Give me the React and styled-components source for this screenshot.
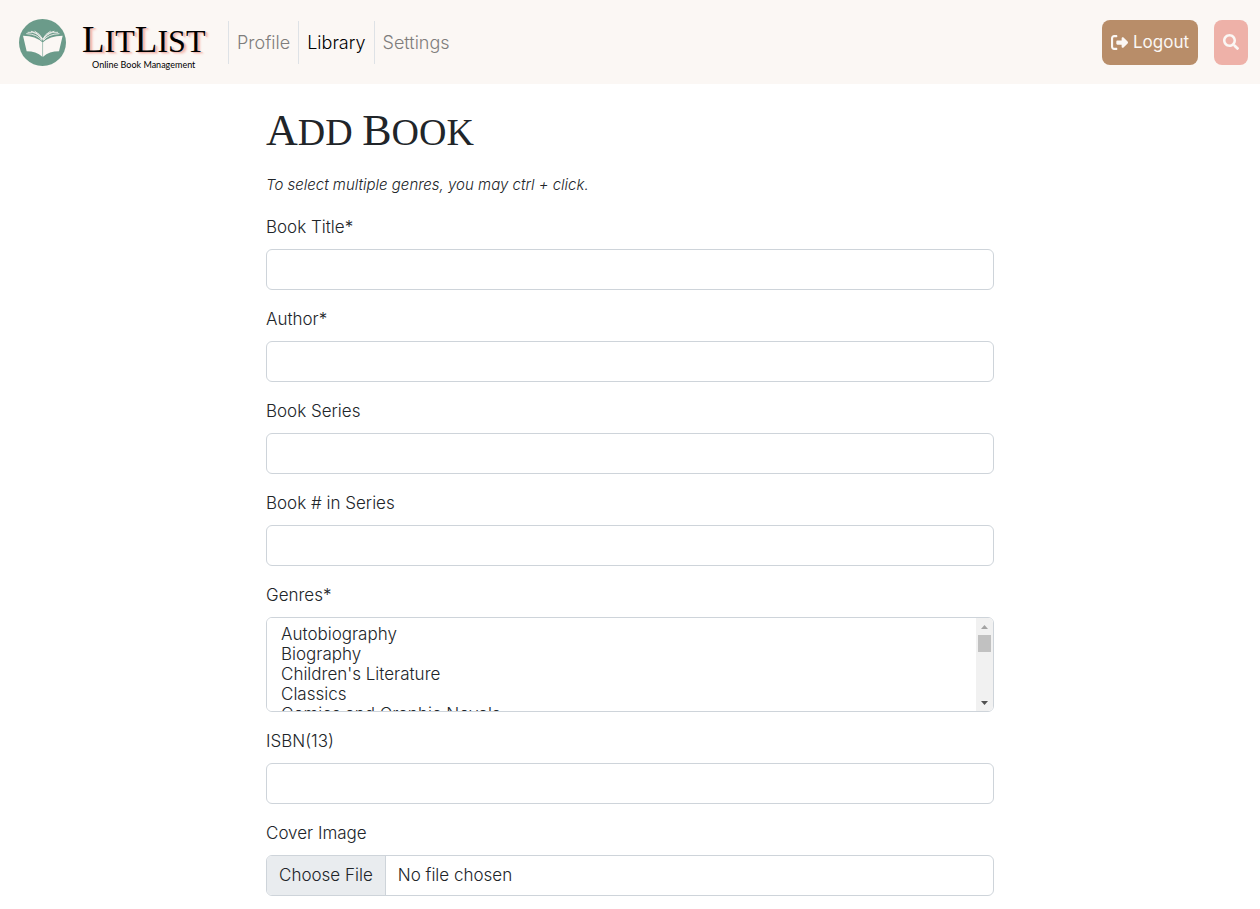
import React, { useState } from 'react';
import styled, { createGlobalStyle } from 'styled-components';
import { FaRightFromBracket } from 'react-icons/fa6';
import { FaSearch } from 'react-icons/fa';

const GlobalStyle = createGlobalStyle`
  *, *::before, *::after { box-sizing: border-box; }
  body {
    margin: 0;
    background: #fff;
    color: #212529;
    font-family: Inter, "Open Sans", sans-serif;
    font-size: 17px;
    font-weight: 300;
    line-height: 27px;
  }
`;

const Header = styled.header`
  display: flex;
  align-items: center;
  min-height: 84px;
  padding: 0 12px 0 19px;
  background: #fbf7f4;
`;

const Brand = styled.a`
  display: flex;
  align-items: center;
  gap: 16px;
  width: 209px;
  color: #000;
  text-decoration: none;
`;

const BrandText = styled.span`
  display: flex;
  flex-direction: column;
  align-items: center;
  gap: 2px;
  padding-top: 10px;
`;

const Caps = styled.span`
  display: inline-block;
  text-transform: uppercase;
  &::first-letter { font-size: ${(p) => p.$initial}px; }
`;

const BrandName = styled.span`
  font-family: "Liberation Serif", serif;
  font-size: 32px;
  font-weight: 400;
  line-height: 32px;
  white-space: nowrap;
  text-shadow: 2px 1px 1px #f3b9b0, 3px 2px 2px #f6cfc8;
`;

const Tagline = styled.span`
  font-family: Lato, "Liberation Sans", sans-serif;
  font-size: 9px;
  font-weight: 400;
  line-height: 12px;
  white-space: nowrap;
`;

const NavList = styled.ul`
  display: flex;
  flex: 1;
  margin: 0;
  padding: 0;
  list-style: none;
`;

const NavItem = styled.li`
  border-left: 1px solid #dee2e6;
`;

const NavLink = styled.a`
  display: block;
  padding: 8px;
  color: ${(p) => (p.$active ? '#000' : '#7f7d7c')};
  font-size: 18px;
  text-decoration: none;
`;

const Actions = styled.div`
  display: flex;
  gap: 16px;
`;

const ActionButton = styled.button`
  display: flex;
  align-items: center;
  gap: 5px;
  height: 45px;
  padding: 0 9px;
  border: 0;
  border-radius: 8px;
  background: ${(p) => p.$color};
  color: #fbf7f4;
  font: inherit;
  font-weight: 400;
`;

const Main = styled.main`
  max-width: 752px;
  margin: 0 auto;
  padding: 24px 12px 14px;
`;

const Title = styled.h1`
  margin: 0 0 16px;
  font-family: "Liberation Serif", serif;
  font-size: 38px;
  font-weight: 400;
  line-height: 45px;
`;

const Hint = styled.p`
  margin: 0 0 16px;
  font-size: 15px;
  font-style: italic;
`;

const Form = styled.form`
  display: grid;
  gap: 16px;
`;

const Field = styled.div`
  display: grid;
  gap: 8px;
`;

const Label = styled.label`
  justify-self: start;
`;

const Input = styled.input`
  width: 100%;
  height: 41px;
  padding: 6px 12px;
  border: 1px solid #ced4da;
  border-radius: 6px;
  background: #fff;
  color: #212529;
  font: inherit;
`;

const FileInput = styled(Input)`
  overflow: hidden;
  padding: 0;
  line-height: 39px;
  &::file-selector-button {
    height: 39px;
    margin: 0 12px 0 0;
    padding: 0 12px;
    border: 0;
    border-right: 1px solid #ced4da;
    background: #e9ecef;
    color: #212529;
    font: inherit;
  }
`;

const SelectFrame = styled.div`
  position: relative;
`;

const GenreSelect = styled.select`
  display: block;
  width: 100%;
  height: 95px;
  padding: 6px 17px 6px 12px;
  border: 1px solid #ced4da;
  border-radius: 6px;
  background: #fff;
  color: #212529;
  font: inherit;
  scrollbar-width: none;
  option {
    min-height: 20px;
    padding: 0 2px;
    font-weight: 300;
    line-height: 20px;
  }
`;

const ScrollTrack = styled.div`
  position: absolute;
  top: 1px;
  right: 1px;
  bottom: 1px;
  display: flex;
  flex-direction: column;
  align-items: center;
  justify-content: space-between;
  width: 17px;
  border-radius: 0 5px 5px 0;
  background: #f1f1f1;
  pointer-events: none;
`;

const ScrollThumb = styled.div`
  position: absolute;
  top: 17px;
  width: 13px;
  height: 17px;
  background: #c1c1c1;
`;

const GENRES = [
  'Autobiography', 'Biography', "Children's Literature", 'Classics',
  'Comics and Graphic Novels', 'Cookbooks', 'Crime', 'Drama', 'Essays',
  'Fantasy', 'Historical Fiction', 'Horror', 'Humor', 'Mystery',
  'Nonfiction', 'Poetry', 'Romance', 'Science Fiction', 'Self Help',
  'Short Stories', 'Thriller', 'Travel', 'True Crime', 'Young Adult',
];

function BookLogo() {
  return (
    <svg width="47" height="47" viewBox="57 57 141 141" aria-hidden="true">
      <circle cx="127.5" cy="127.5" r="70.5" fill="#6b9b8a" />
      <g fill="#fbf7f4">
        <path d="M69 107 Q108 108 127 127 V170 Q108 154 80 154 Z" />
        <path d="M188 107 Q148 108 129 127 V170 Q148 154 177 154 Z" />
      </g>
      <g fill="none" stroke="#fbf7f4" strokeWidth="2.5" strokeLinecap="round">
        <path d="M80 101 Q112 102 125 121" />
        <path d="M84 97 L98 97 Q117 102 126 119" />
        <path d="M94 94 Q116 99 126 117" />
        <path d="M105 94 Q120 101 127 116" />
        <path d="M177 101 Q144 102 131 121" />
        <path d="M173 97 L158 97 Q140 102 130 119" />
        <path d="M162 94 Q140 99 130 117" />
        <path d="M151 94 Q136 101 129 116" />
      </g>
      <path d="M128 126V170" stroke="#b9d0c6" strokeWidth="2" />
    </svg>
  );
}

function TextField({ id, label, type = 'text' }) {
  return (
    <Field>
      <Label htmlFor={id}>{label}</Label>
      <Input id={id} name={id} type={type} />
    </Field>
  );
}

function GenreField() {
  const [progress, setProgress] = useState(0);
  const onScroll = (e) => {
    const { scrollTop, scrollHeight, clientHeight } = e.currentTarget;
    setProgress(scrollTop / Math.max(1, scrollHeight - clientHeight));
  };
  return (
    <Field>
      <Label htmlFor="genres">Genres*</Label>
      <SelectFrame>
        <GenreSelect id="genres" name="genres" multiple onScroll={onScroll}>
          {GENRES.map((g) => <option key={g}>{g}</option>)}
        </GenreSelect>
        <ScrollTrack aria-hidden="true">
          <svg width="17" height="17"><path d="M5 11h7L8.5 7z" fill="#a3a3a3" /></svg>
          <ScrollThumb style={{ transform: `translateY(${Math.round(progress * 42)}px)` }} />
          <svg width="17" height="17"><path d="M5 7h7L8.5 11z" fill="#505050" /></svg>
        </ScrollTrack>
      </SelectFrame>
    </Field>
  );
}

export default function App() {
  return (
    <>
      <GlobalStyle />
      <Header>
        <Brand href="#home">
          <BookLogo />
          <BrandText>
            <BrandName>
              <Caps $initial={37}>Lit</Caps>
              <Caps $initial={37}>List</Caps>
            </BrandName>
            <Tagline>Online Book Management</Tagline>
          </BrandText>
        </Brand>
        <NavList>
          <NavItem><NavLink href="#profile">Profile</NavLink></NavItem>
          <NavItem><NavLink href="#library" $active>Library</NavLink></NavItem>
          <NavItem><NavLink href="#settings">Settings</NavLink></NavItem>
        </NavList>
        <Actions>
          <ActionButton type="button" $color="#b88d69">
            <FaRightFromBracket size={17} />
            Logout
          </ActionButton>
          <ActionButton type="button" $color="#eeb1a8" aria-label="Search">
            <FaSearch size={16} />
          </ActionButton>
        </Actions>
      </Header>
      <Main>
        <Title>
          <Caps $initial={44}>Add</Caps> <Caps $initial={44}>Book</Caps>
        </Title>
        <Hint>To select multiple genres, you may ctrl + click.</Hint>
        <Form>
          <TextField id="title" label="Book Title*" />
          <TextField id="author" label="Author*" />
          <TextField id="series" label="Book Series" />
          <TextField id="number" label="Book # in Series" />
          <GenreField />
          <TextField id="isbn" label="ISBN(13)" />
          <Field>
            <Label htmlFor="cover">Cover Image</Label>
            <FileInput id="cover" name="cover" type="file" />
          </Field>
        </Form>
      </Main>
    </>
  );
}
